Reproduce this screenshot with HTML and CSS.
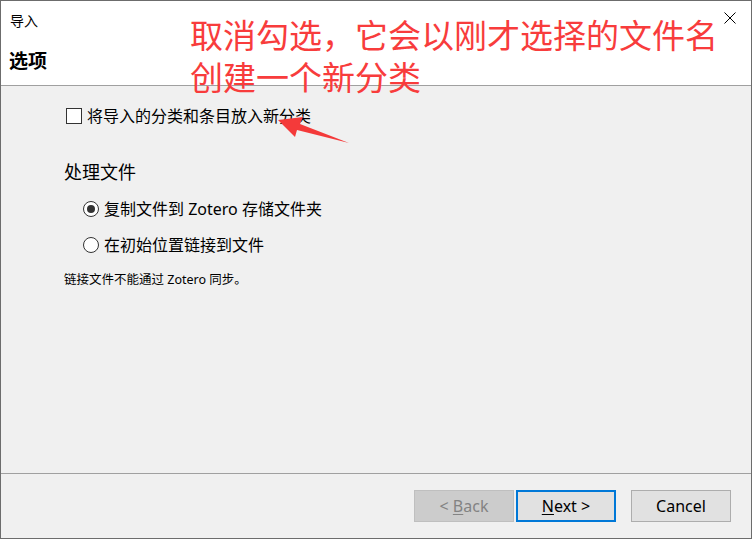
FILE: index.html
```html
<!DOCTYPE html>
<html lang="zh-CN">
<head>
  <meta charset="UTF-8">
  <meta name="viewport" content="width=device-width, initial-scale=1.0">
  <title>导入</title>
  <link rel="stylesheet" href="styles.css">
</head>
<body>
  <div class="wizard">
    <div class="wizard-header">
      <div class="window-title">导入</div>
      <button class="close-btn" aria-label="关闭">
        <svg width="12" height="12" viewBox="0 0 12 12">
          <path d="M0.5 0.5 L11.5 11.5 M11.5 0.5 L0.5 11.5" stroke="#000" stroke-width="1" fill="none"/>
        </svg>
      </button>
      <h1 class="page-title">选项</h1>
    </div>

    <div class="wizard-body">
      <label class="check-row">
        <input type="checkbox" class="check">
        <span>将导入的分类和条目放入新分类</span>
      </label>

      <h2 class="section-title">处理文件</h2>

      <div class="radio-group">
        <label class="radio-row">
          <input type="radio" name="files" class="radio" checked>
          <span>复制文件到 Zotero 存储文件夹</span>
        </label>
        <label class="radio-row">
          <input type="radio" name="files" class="radio">
          <span>在初始位置链接到文件</span>
        </label>
      </div>

      <p class="note">链接文件不能通过 Zotero 同步。</p>
    </div>

    <div class="wizard-footer">
      <button class="btn btn-disabled" disabled>&lt; <u>B</u>ack</button>
      <button class="btn btn-default"><u>N</u>ext &gt;</button>
      <button class="btn btn-cancel">Cancel</button>
    </div>

    <!-- 标注 -->
    <div class="annotation">取消勾选，它会以刚才选择的文件名<br>创建一个新分类</div>
    <svg class="annotation-arrow" width="752" height="539" viewBox="0 0 752 539">
      <polygon points="278,120 303,117 300,124 349,143 297,130 295,137" fill="#f43a3a"/>
    </svg>
  </div>
</body>
</html>
```

FILE: styles.css
```css
* {
  margin: 0;
  padding: 0;
  box-sizing: border-box;
}

body {
  font-family: "Noto Sans", "Noto Sans CJK SC", sans-serif;
  background: #f0f0f0;
  color: #000;
  width: 752px;
  height: 539px;
  overflow: hidden;
}

.wizard {
  position: relative;
  width: 752px;
  height: 539px;
  border: 1px solid #6c6c6c;
  display: flex;
  flex-direction: column;
  background: #f0f0f0;
}

.wizard-header {
  position: relative;
  height: 85px;
  background: #fff;
  border-bottom: 1px solid #a0a0a0;
  padding: 9px 0 0 8px;
}

.window-title {
  font-family: "Noto Sans CJK SC", sans-serif;
  font-size: 14px;
  line-height: 20px;
  padding-left: 1px;
}

.close-btn {
  position: absolute;
  top: 11px;
  right: 15px;
  border: none;
  background: none;
  width: 12px;
  height: 12px;
  display: flex;
}

.page-title {
  font-family: "Noto Sans CJK SC", sans-serif;
  font-size: 19px;
  font-weight: 700;
  line-height: 24px;
  margin-top: 18px;
}

.wizard-body {
  flex: 1;
  padding: 19px 0 0 63px;
  font-size: 16px;
}

.check-row,
.radio-row {
  display: flex;
  align-items: center;
  gap: 5px;
  line-height: 22px;
  font-family: "Noto Sans", "Noto Sans CJK SC", sans-serif;
}

.check-row {
  margin-left: 2px;
}

.check {
  appearance: none;
  width: 16px;
  height: 16px;
  border: 1.5px solid #333;
  background: #fff;
  margin: 0;
}

.section-title {
  font-family: "Noto Sans CJK SC", sans-serif;
  font-size: 18px;
  font-weight: 400;
  line-height: 24px;
  margin-top: 32px;
}

.radio-group {
  margin: 15px 0 0 19px;
  display: flex;
  flex-direction: column;
  gap: 14px;
}

.radio {
  appearance: none;
  width: 16px;
  height: 16px;
  border: 1.5px solid #333;
  border-radius: 50%;
  background: #fff;
  margin: 0;
  display: grid;
  place-content: center;
}

.radio:checked::before {
  content: "";
  width: 8px;
  height: 8px;
  border-radius: 50%;
  background: #333;
}

.note {
  font-size: 12.5px;
  line-height: 18px;
  margin-top: 15px;
}

.wizard-footer {
  height: 65px;
  border-top: 1px solid #a0a0a0;
  display: flex;
  justify-content: flex-end;
  align-items: flex-start;
  padding: 16px 20px 0 0;
}

.btn {
  width: 100px;
  height: 32px;
  font-family: "Noto Sans", sans-serif;
  font-size: 16px;
  background: #e1e1e1;
  border: 1px solid #adadad;
  color: #000;
}

.btn u {
  text-underline-offset: 2px;
}

.btn-disabled {
  background: #cccccc;
  border-color: #bfbfbf;
  color: #838383;
  margin-right: 2px;
}

.btn-default {
  border: 2px solid #0078d7;
  margin-right: 15px;
}

.annotation {
  position: absolute;
  left: 189px;
  top: 12px;
  font-family: "Noto Sans CJK SC", sans-serif;
  font-size: 33px;
  line-height: 42px;
  color: #f83c3c;
  white-space: nowrap;
}

.annotation-arrow {
  position: absolute;
  left: -1px;
  top: -1px;
  pointer-events: none;
}
```
